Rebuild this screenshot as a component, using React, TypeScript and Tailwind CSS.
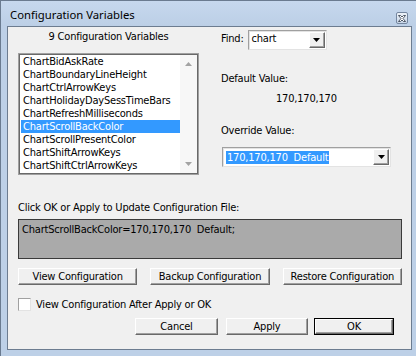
import type { ReactNode } from "react";

const ITEMS = [
  "ChartBidAskRate",
  "ChartBoundaryLineHeight",
  "ChartCtrlArrowKeys",
  "ChartHolidayDaySessTimeBars",
  "ChartRefreshMilliseconds",
  "ChartScrollBackColor",
  "ChartScrollPresentColor",
  "ChartShiftArrowKeys",
  "ChartShiftCtrlArrowKeys",
];

function Arrow({ up = false, color = "#000" }: { up?: boolean; color?: string }) {
  return (
    <svg width="7" height="4" viewBox="0 0 7 4" className="block">
      <path d={up ? "M3.5 0 L7 4 L0 4 Z" : "M0 0 L7 0 L3.5 4 Z"} fill={color} />
    </svg>
  );
}

// classic raised push button
function Btn({ children, className = "" }: { children: ReactNode; className?: string }) {
  return (
    <div
      className={`flex items-center justify-center border border-t-white border-l-white border-r-[#696969] border-b-[#696969] bg-[#f0f0f0] shadow-[inset_-1px_-1px_0_#a0a0a0] leading-none ${className}`}
    >
      {children}
    </div>
  );
}

function Combo({ children, className = "" }: { children: ReactNode; className?: string }) {
  return (
    <div
      className={`flex items-stretch border border-t-[#a0a0a0] border-l-[#a0a0a0] border-r-[#e3e3e3] border-b-[#e3e3e3] bg-white p-[1px] shadow-[inset_1px_1px_0_#e3e3e3] ${className}`}
    >
      <div className="flex flex-1 items-center overflow-hidden pl-[2px]">{children}</div>
      <Btn className="w-[16px]">
        <Arrow />
      </Btn>
    </div>
  );
}

export default function App() {
  return (
    <div className="flex h-[356px] w-[416px] flex-col border-l border-t border-[#6a7b90] bg-[#bdd0e7] text-[11px] leading-[13px] tracking-[-0.2px] text-black font-['DejaVu_Sans_Condensed','Liberation_Sans',sans-serif]">
      {/* title bar */}
      <div className="relative flex h-[25px] shrink-0 items-start bg-gradient-to-b from-[#c6d8ee] to-[#bccfe6]">
        <span className="ml-[9px] mt-[6px] text-[11.3px] leading-[16px] tracking-normal font-['Noto_Sans',sans-serif]">
          Configuration Variables
        </span>
        <div className="absolute left-[395px] top-[11px] flex h-[12px] w-[12px] items-center justify-center rounded-[2px] border border-[#7587a0] bg-gradient-to-b from-[#eef3f9] to-[#c8d6e8]">
          <svg width="8" height="7" viewBox="0 0 8 7">
            <path
              d="M0.5 0.5 H2.5 L4 2 L5.5 0.5 H7.5 L5 3.5 L7.5 6.5 H5.5 L4 5 L2.5 6.5 H0.5 L3 3.5 Z"
              fill="#fff"
              stroke="#3c4656"
              strokeWidth="0.9"
              strokeLinejoin="round"
            />
          </svg>
        </div>
      </div>

      {/* client area */}
      <div className="mb-[6px] ml-[6px] mr-[4px] flex flex-1 flex-col border border-[#6c7c90] bg-[#f0f0f0]">
        <div className="flex pt-[3px]">
          {/* left: list */}
          <div className="ml-[10px] w-[181px]">
            <div className="h-[23px] text-center">9 Configuration Variables</div>
            <div className="flex h-[122px] border border-[#a0a0a0] bg-white shadow-[inset_1px_1px_0_#696969,inset_-1px_-1px_0_#696969]">
              <div className="flex-1 pl-[2px] pt-[1px]">
                {ITEMS.map((it) => (
                  <div
                    key={it}
                    className={`h-[13px] whitespace-nowrap pl-[2px] ${
                      it === "ChartScrollBackColor" ? "bg-[#3399ff] text-white" : ""
                    }`}
                  >
                    {it}
                  </div>
                ))}
              </div>
              <div className="my-[1px] mr-[1px] flex w-[17px] flex-col items-center justify-between bg-[#f7f7f7] py-[7px]">
                <Arrow up color="#a3a3a3" />
                <Arrow color="#a3a3a3" />
              </div>
            </div>
          </div>

          {/* right: find / values */}
          <div className="ml-[22px] flex flex-col">
            <div className="flex h-[20px] items-center gap-[4px]">
              <span className="-mt-[3px]">Find:</span>
              <Combo className="h-[20px] w-[79px]">
                <span className="-mt-[3px]">chart</span>
              </Combo>
            </div>
            <div className="mt-[22px]">Default Value:</div>
            <div className="ml-[55px] mt-[7px]">170,170,170</div>
            <div className="mt-[19px]">Override Value:</div>
            <Combo className="ml-[1px] mt-[10px] h-[20px] w-[169px]">
              <span className="bg-[#3399ff] pl-[1px] pr-[1px] text-white">170,170,170&nbsp;&nbsp;Default</span>
            </Combo>
          </div>
        </div>

        <div className="ml-[10px] mt-[26px]">Click OK or Apply to Update Configuration File:</div>
        <div className="ml-[10px] mt-[5px] h-[40px] w-[384px] border border-[#3a3a3a] bg-[#aaaaaa] px-[3px] pt-[3px]">
          ChartScrollBackColor=170,170,170&nbsp;&nbsp;Default;
        </div>

        <div className="ml-[10px] mt-[9px] grid w-[384px] grid-cols-3 gap-[13px]">
          <Btn className="h-[17px]">View Configuration</Btn>
          <Btn className="h-[17px]">Backup Configuration</Btn>
          <Btn className="h-[17px]">Restore Configuration</Btn>
        </div>

        <div className="ml-[10px] mt-[13px] flex items-center gap-[5px]">
          <div className="h-[13px] w-[13px] border border-t-[#a0a0a0] border-l-[#a0a0a0] border-r-[#e3e3e3] border-b-[#e3e3e3] bg-white" />
          <span>View Configuration After Apply or OK</span>
        </div>

        <div className="ml-[127px] mt-[7px] flex items-start">
          <Btn className="h-[17px] w-[83px]">Cancel</Btn>
          <Btn className="ml-[8px] h-[17px] w-[82px]">Apply</Btn>
          <div className="ml-[6px] border border-black">
            <Btn className="h-[15px] w-[78px]">OK</Btn>
          </div>
        </div>
      </div>
    </div>
  );
}
